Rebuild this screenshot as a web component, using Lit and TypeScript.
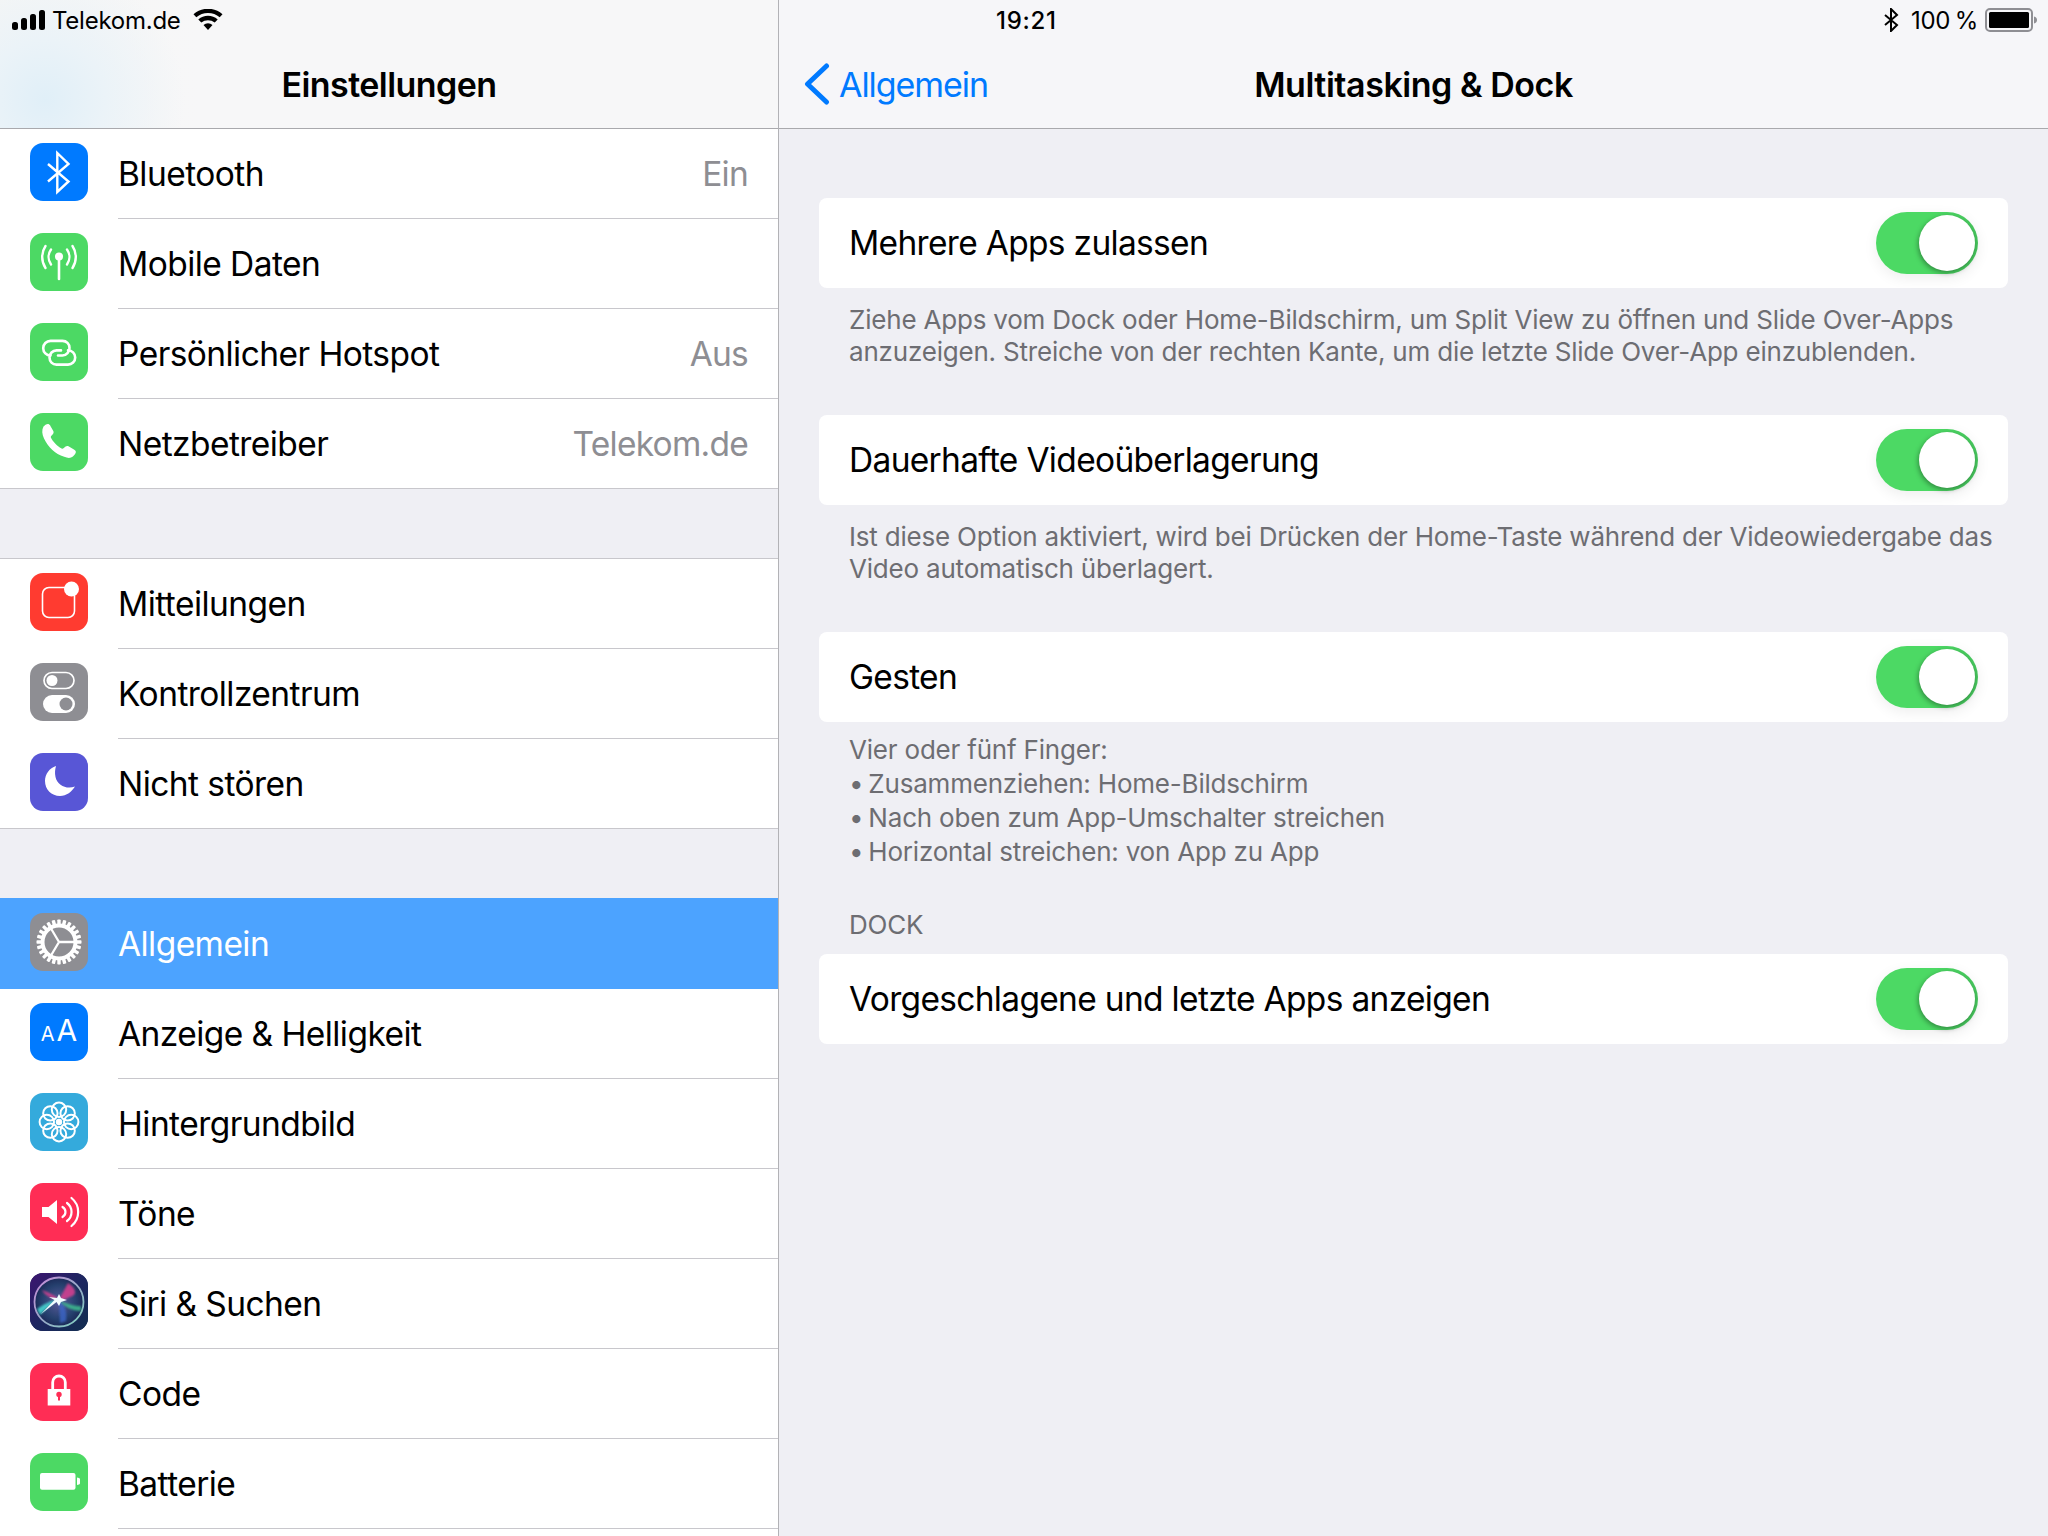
import { LitElement, html, css, svg } from "lit";
import { customElement } from "lit/decorators.js";

const gearTeeth = Array.from({ length: 24 }, (_, i) => svg`<rect x="27.3" y="6.5" width="3.4" height="6" rx="0.8" fill="#fff" transform="rotate(${i * 15} 29 29)"></rect>`);
const petals = Array.from({ length: 8 }, (_, i) => svg`<circle cx="29" cy="16.8" r="7.2" fill="none" stroke="#fff" stroke-width="2" transform="rotate(${i * 45} 29 29)"></circle>`);

const icons: Record<string, unknown> = {
  bt: svg`<path d="M18 21 L38.5 38.5 L27.3 49 V10 L38.5 21 L18 38.5" fill="none" stroke="#fff" stroke-width="2.4"></path>`,
  cell: svg`<circle cx="29" cy="23.5" r="4" fill="#fff"></circle>
    <path d="M29 25V46" fill="none" stroke="#fff" stroke-width="2.6" stroke-linecap="round"></path>
    <path d="M21 16.5a13 13 0 0 0 0 15M37 16.5a13 13 0 0 1 0 15" fill="none" stroke="#fff" stroke-width="2.4" stroke-linecap="round"></path>
    <path d="M15.5 13a20 20 0 0 0 0 22M42.5 13a20 20 0 0 1 0 22" fill="none" stroke="#fff" stroke-width="2.4" stroke-linecap="round"></path>`,
  hotspot: svg`<path d="M20.5 32.5a7.3 7.3 0 0 1 0-14.6H32.5c4 0 7 3 7 7s-3 7.6-7 7.6H28" fill="none" stroke="#fff" stroke-width="2.6" stroke-linecap="round"></path>
    <path d="M38 27.2a7.2 7.2 0 0 1 0 14.4H26.5c-4 0-7-3-7-7s3-7.2 7-7.2H31" fill="none" stroke="#fff" stroke-width="2.6" stroke-linecap="round"></path>`,
  phone: svg`<path d="M13.5 13.5c1.2-1.5 3.5-3 5-2.5 1 .4 1.6 1.3 2.2 2.4l2.6 4.7c.5 1 .4 2-.3 2.9l-1.8 2c-.5.6-.5 1.2-.1 2 1.7 3.3 5.8 8 10.5 10.5.7.4 1.3.3 1.9-.2l2.1-1.8c.9-.7 1.9-.8 2.9-.2l5 2.9c1.1.6 2 1.3 2.3 2.3.4 1.3-1.3 3.7-2.9 5-2.3 1.9-5.3 1.7-8.7.2C25 41 18 34 14 25.5c-2-4.3-2.4-8.5-.5-12z" fill="#fff"></path>`,
  notif: svg`<path d="M40 14.5H19a6.5 6.5 0 0 0-6.5 6.5v17a6.5 6.5 0 0 0 6.5 6.5h19a6.5 6.5 0 0 0 6.5-6.5V21" fill="none" stroke="#fff" stroke-width="1.6"></path><circle cx="41.5" cy="16" r="7.5" fill="#fff"></circle>`,
  ctrl: svg`<rect x="14" y="9.5" width="30" height="16" rx="8" fill="none" stroke="#fff" stroke-width="1.7"></rect><circle cx="22" cy="17.5" r="5.5" fill="#fff"></circle>
    <rect x="13" y="32" width="32" height="18" rx="9" fill="#fff"></rect><circle cx="36" cy="41" r="6.5" fill="#8e8e93"></circle>`,
  moon: svg`<path d="M26 13C19.5 15 15 21 15 28C15 36.5 21.5 43 30 43C36.5 43 42 38.5 45 33.5C37 36.5 27.5 33 25.5 24C24.7 20 25 16.5 26 13z" fill="#fff"></path>`,
  gear: svg`${gearTeeth}<circle cx="29" cy="29" r="16.5" fill="none" stroke="#fff" stroke-width="4"></circle><path d="M29 29H45M29 29L21 15.5M29 29L21 42.5" fill="none" stroke="#fff" stroke-width="2.3"></path>`,
  flower: svg`${petals}<circle cx="29" cy="29" r="3.2" fill="#fff"></circle>`,
  sound: svg`<path d="M12 24h6.5L27 17v24L18.5 34H12z" fill="#fff"></path><path d="M32.5 24a5.7 5.7 0 0 1 0 10M37 20a11.2 11.2 0 0 1 0 18M41.5 15a18 18 0 0 1 0 28" fill="none" stroke="#fff" stroke-width="2.2" stroke-linecap="round"></path>`,
  siri: svg`<defs>
      <radialGradient id="sg" cx="50%" cy="50%" r="50%"><stop offset="0" stop-color="#5a5a9a"></stop><stop offset=".7" stop-color="#25406e"></stop><stop offset="1" stop-color="#1c2a58"></stop></radialGradient>
      <linearGradient id="sb" x1="0" y1="0" x2="1" y2="1"><stop offset="0" stop-color="#3d1470"></stop><stop offset=".5" stop-color="#1d2660"></stop><stop offset="1" stop-color="#122e50"></stop></linearGradient>
      <linearGradient id="sr" x1="0" y1="0" x2="1" y2="1"><stop offset="0" stop-color="#c78ad8"></stop><stop offset=".5" stop-color="#9aa6c8"></stop><stop offset="1" stop-color="#7fd6c0"></stop></linearGradient>
      <filter id="sf" x="-20%" y="-20%" width="140%" height="140%"><feGaussianBlur stdDeviation="1.2"></feGaussianBlur></filter>
      <filter id="sf2" x="-20%" y="-20%" width="140%" height="140%"><feGaussianBlur stdDeviation=".5"></feGaussianBlur></filter>
      <clipPath id="sc"><circle cx="29" cy="29" r="24"></circle></clipPath>
    </defs>
    <rect width="58" height="58" fill="url(#sb)"></rect>
    <circle cx="29" cy="29" r="24.5" fill="url(#sg)" stroke="url(#sr)" stroke-width="1.8"></circle>
    <g clip-path="url(#sc)">
      <path d="M12 17C20 20 26 23 29 27L38 10C46 15 48 22 40 24 36 26 33 27 29 28 24 26 16 24 12 17z" fill="#d2418f" filter="url(#sf)" opacity=".9"></path>
      <path d="M29 27C36 32 37 40 36 48L30 50C30 42 29 34 29 27z" fill="#3d66c8" filter="url(#sf)" opacity=".8"></path>
      <path d="M29 27C38 31 44 33 51 33L51 38C43 38 34 34 29 27z" fill="#3fbf90" filter="url(#sf)" opacity=".85"></path>
      <path d="M29 26C23 30 16 36 10 42L7 36C12 32 22 27 29 26z" fill="#47d4cf" filter="url(#sf)" opacity=".9"></path>
      <path d="M29 21L31 25 37 27 31 29 29 33 26.5 29 11 41 24.5 27 19 24 27 25z" fill="#f2fdff" filter="url(#sf2)"></path>
    </g>`,
  lock: svg`<path d="M22.7 26.5V19.3a6.3 6.3 0 0 1 12.6 0V26.5" fill="none" stroke="#fff" stroke-width="2.8"></path><path d="M17.7 26h22.6V42.5H17.7z" fill="#fff"></path><circle cx="29" cy="31.5" r="2.7" fill="#ff2d55"></circle><path d="M29 32v5.5" stroke="#ff2d55" stroke-width="2"></path>`,
  batt: svg`<rect x="10" y="20" width="35.5" height="16.7" rx="2" fill="#fff"></rect><path d="M47 24.5l2 .5a1.5 1.5 0 0 1 1 1.5v3.5a1.5 1.5 0 0 1-1 1.5l-2 .5z" fill="#fff"></path>`,
};

interface Row { icon: string; bg: string; label: string; value?: string; sel?: boolean; text?: boolean }

const groups: Row[][] = [
  [
    { icon: "bt", bg: "#007aff", label: "Bluetooth", value: "Ein" },
    { icon: "cell", bg: "#4cd964", label: "Mobile Daten" },
    { icon: "hotspot", bg: "#4cd964", label: "Persönlicher Hotspot", value: "Aus" },
    { icon: "phone", bg: "#4cd964", label: "Netzbetreiber", value: "Telekom.de" },
  ],
  [
    { icon: "notif", bg: "#ff3b30", label: "Mitteilungen" },
    { icon: "ctrl", bg: "#8e8e93", label: "Kontrollzentrum" },
    { icon: "moon", bg: "#5856d6", label: "Nicht stören" },
  ],
  [
    { icon: "gear", bg: "#8e8e93", label: "Allgemein", sel: true },
    { icon: "aa", bg: "#007aff", label: "Anzeige & Helligkeit", text: true },
    { icon: "flower", bg: "#34aadc", label: "Hintergrundbild" },
    { icon: "sound", bg: "#ff2d55", label: "Töne" },
    { icon: "siri", bg: "#1a2a55", label: "Siri & Suchen" },
    { icon: "lock", bg: "#ff2d55", label: "Code" },
    { icon: "batt", bg: "#4cd964", label: "Batterie" },
    { icon: "none", bg: "#fff", label: "" },
  ],
];

@customElement("app-root")
export class AppRoot extends LitElement {
  static styles = css`
    :host { display: block; width: 2048px; height: 1536px; overflow: hidden; font-family: Inter, "Liberation Sans", sans-serif; color: #000; background: #efeff4; }
    .app { display: flex; height: 1536px; position: relative; }
    .left { width: 778px; flex: none; display: flex; flex-direction: column; overflow: hidden; }
    .divider { width: 1px; flex: none; background: #b2b2b6; }
    .right { flex: 1; min-width: 0; display: flex; flex-direction: column; }
    .bar { height: 128px; flex: none; border-bottom: 1px solid #a9a9ad; background: #f6f6f9; display: flex; flex-direction: column; }
    .lbar { background: radial-gradient(circle at 45px 100px, #e0eff8 0, #ebf3f8 60px, rgba(246,246,247,0) 140px), linear-gradient(90deg, #f7f6f4 0, #f7f7f8 200px); }
    .status { height: 40px; display: flex; align-items: center; font-size: 24px; letter-spacing: -0.25px; flex: none; }
    .title-row { flex: 1; display: flex; align-items: center; justify-content: center; font-size: 34px; font-weight: 600; letter-spacing: -0.55px; }
    .sig { margin-left: 12px; margin-right: 6px; }
    .wifi { margin-left: 12px; }
    .groups { flex: 1; min-height: 0; display: flex; flex-direction: column; }
    .group { background: #fff; flex: none; }
    .g0 { height: 359px; border-bottom: 1px solid #c8c7cc; }
    .g1 { height: 269px; border-top: 1px solid #c8c7cc; border-bottom: 1px solid #c8c7cc; margin-top: 69px; }
    .g2 { border-top: 1px solid #4ca3ff; margin-top: 69px; }
    .row { height: 90px; display: flex; align-items: flex-start; padding-left: 30px; box-sizing: border-box; }
    .g0 .row:last-child, .g1 .row:last-child { height: 89px; }
    .ic { width: 58px; height: 58px; border-radius: 13px; margin-top: 14px; flex: none; overflow: hidden; display: flex; align-items: center; justify-content: center; }
    .ic svg { display: block; }
    .aa { color: #fff; font-size: 30px; line-height: 58px; white-space: nowrap; }
    .aa span { font-size: 20px; margin-right: 2px; }
    .main { flex: 1; margin-left: 30px; height: 90px; border-bottom: 1px solid #c8c7cc; box-sizing: border-box; display: flex; align-items: center; justify-content: space-between; padding-right: 30px; font-size: 33.5px; letter-spacing: -0.56px; }
    .g0 .row:last-child .main, .g1 .row:last-child .main { height: 89px; border-bottom: none; }
    .val { color: #8e8e93; letter-spacing: -0.75px; }
    .row.sel { background: #4ca3ff; color: #fff; }
    .row.sel .main { border-bottom: none; }
    .time { position: absolute; left: 996px; top: 0; height: 40px; display: flex; align-items: center; font-size: 24px; font-weight: 500; letter-spacing: 0.7px; }
    .rstatus { justify-content: flex-end; padding-right: 10px; }
    .pct { margin-left: 12px; word-spacing: -2px; }
    .batt { margin-left: 7px; }
    .nav { flex: 1; display: flex; align-items: center; position: relative; }
    .back { display: flex; align-items: center; color: #007aff; font-size: 34px; letter-spacing: -1.05px; margin-left: 25px; gap: 9px; }
    .ntitle { position: absolute; left: 0; right: 0; top: 0; bottom: 0; display: flex; align-items: center; justify-content: center; font-size: 34px; font-weight: 600; letter-spacing: -0.45px; }
    .content { padding: 69px 40px 0 40px; flex: 1; }
    .card { height: 90px; background: #fff; border-radius: 8px; display: flex; align-items: center; justify-content: space-between; padding: 0 30px; font-size: 33.5px; letter-spacing: -0.68px; }
    .toggle { width: 102px; height: 62px; border-radius: 31px; background: linear-gradient(90deg, #4cd964 60%, #46c45c 100%); position: relative; box-shadow: 0 4px 14px rgba(0,0,0,.07); }
    .toggle::after { content: ""; position: absolute; left: 43px; top: 3px; width: 56px; height: 56px; border-radius: 50%; background: #fff; box-shadow: -1px 2px 5px rgba(0,0,0,.35); }
    .foot { padding: 16px 30px 0; font-size: 26px; line-height: 32px; color: #6d6d72; letter-spacing: -0.2px; height: 127px; box-sizing: border-box; white-space: nowrap; }
    .foot.g { line-height: 34px; height: 147px; padding-top: 11px; }
    .bl { letter-spacing: -1.3px; }
    .head { padding: 39px 30px 0; height: 85px; box-sizing: border-box; font-size: 26px; line-height: 34px; color: #6d6d72; letter-spacing: -0.2px; }
  `;

  private icon(r: Row) {
    if (r.icon === "none") return html`<div class="ic" style="background:${r.bg}"></div>`;
    if (r.text) return html`<div class="ic" style="background:${r.bg}"><div class="aa"><span>A</span>A</div></div>`;
    return html`<div class="ic" style="background:${r.bg}"><svg width="58" height="58" viewBox="0 0 58 58">${icons[r.icon]}</svg></div>`;
  }

  private card(label: string) {
    return html`<div class="card"><span>${label}</span><div class="toggle"></div></div>`;
  }

  render() {
    return html`
      <div class="app">
        <div class="left">
          <div class="bar lbar">
            <div class="status">
              <svg class="sig" width="34" height="20" viewBox="0 0 34 20"><rect x="0" y="12" width="6" height="8" rx="2.5"></rect><rect x="9" y="8" width="6" height="12" rx="2.5"></rect><rect x="18" y="4" width="6" height="16" rx="2.5"></rect><rect x="27" y="0" width="6" height="20" rx="2.5"></rect></svg>
              <span>Telekom.de</span>
              <svg class="wifi" width="30" height="22" viewBox="0 0 30 22"><path d="M15 21l-4.5-5a7 7 0 0 1 9 0zM8.3 13.6l-3-3.2a15 15 0 0 1 19.4 0l-3 3.2a11 11 0 0 0-13.4 0zM3.3 8.2L.5 5.2a22 22 0 0 1 29 0l-2.8 3a18 18 0 0 0-23.4 0z"></path></svg>
            </div>
            <div class="title-row">Einstellungen</div>
          </div>
          <div class="groups">
            ${groups.map(
              (g, i) => html`<div class="group g${i}">
                ${g.map(
                  (r) => html`<div class="row ${r.sel ? "sel" : ""}">
                    ${this.icon(r)}
                    <div class="main"><span>${r.label}</span>${r.value ? html`<span class="val">${r.value}</span>` : ""}</div>
                  </div>`
                )}
              </div>`
            )}
          </div>
        </div>
        <div class="divider"></div>
        <div class="right">
          <div class="bar">
            <div class="status rstatus">
              <svg width="16" height="24" viewBox="0 0 16 24"><path d="M2 7l12 10-6 6V1l6 6L2 17" fill="none" stroke="#000" stroke-width="2"></path></svg>
              <span class="pct">100 %</span>
              <svg class="batt" width="53" height="24" viewBox="0 0 53 24"><rect x="1" y="1" width="46" height="22" rx="4" fill="none" stroke="#8e8e93" stroke-width="2"></rect><rect x="4" y="4" width="40" height="16" rx="1.5" fill="#000"></rect><path d="M49 8.5c2 .4 3 1.6 3 3.5s-1 3.1-3 3.5z" fill="#8e8e93"></path></svg>
            </div>
            <div class="nav">
              <div class="back"><svg width="26" height="42" viewBox="0 0 26 42"><path d="M22.5 3L3.5 21l19 18" fill="none" stroke="#007aff" stroke-width="5" stroke-linecap="round" stroke-linejoin="round"></path></svg>Allgemein</div>
              <div class="ntitle">Multitasking &amp; Dock</div>
            </div>
          </div>
          <div class="content">
            ${this.card("Mehrere Apps zulassen")}
            <div class="foot">Ziehe Apps vom Dock oder Home-Bildschirm, um Split View zu öffnen und Slide Over-Apps<br />anzuzeigen. Streiche von der rechten Kante, um die letzte Slide Over-App einzublenden.</div>
            ${this.card("Dauerhafte Videoüberlagerung")}
            <div class="foot">Ist diese Option aktiviert, wird bei Drücken der Home-Taste während der Videowiedergabe das<br />Video automatisch überlagert.</div>
            ${this.card("Gesten")}
            <div class="foot g">Vier oder fünf Finger:<br /><span class="bl">• </span>Zusammenziehen: Home-Bildschirm<br /><span class="bl">• </span>Nach oben zum App-Umschalter streichen<br /><span class="bl">• </span>Horizontal streichen: von App zu App</div>
            <div class="head">DOCK</div>
            ${this.card("Vorgeschlagene und letzte Apps anzeigen")}
          </div>
        </div>
        <div class="time">19:21</div>
      </div>
    `;
  }
}
